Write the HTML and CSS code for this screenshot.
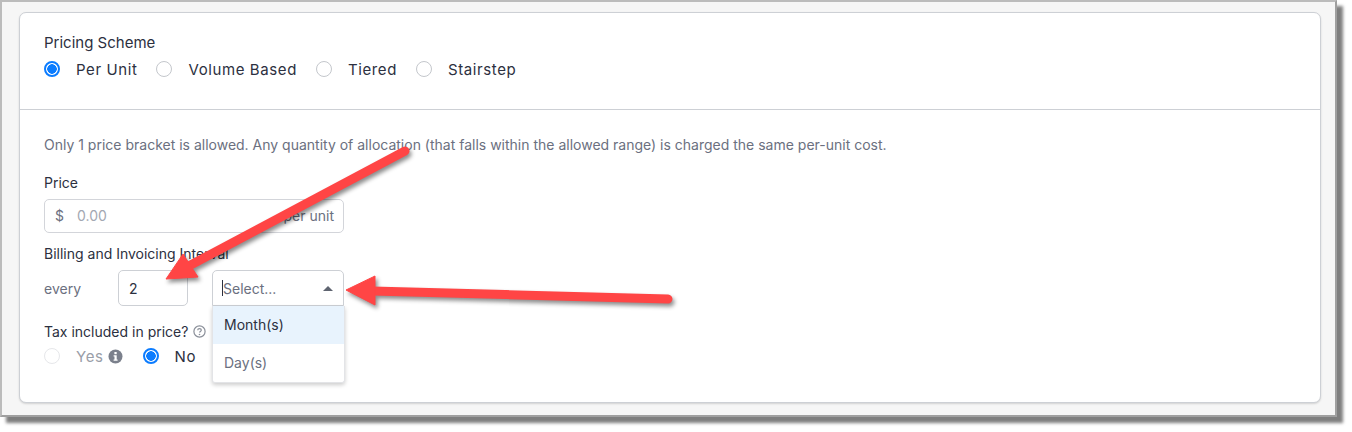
FILE: index.html
```html
<!DOCTYPE html>
<html lang="en">
<head>
    <meta charset="UTF-8">
    <title>Pricing Scheme</title>
    <link rel="stylesheet" href="styles.css">
</head>
<body>
    <div class="frame">
        <div class="card">
            <div class="card-head">
                <div class="field-label scheme-label">Pricing Scheme</div>
                <div class="radio-row">
                    <span class="radio checked"></span><span class="radio-text">Per Unit</span>
                    <span class="radio"></span><span class="radio-text">Volume Based</span>
                    <span class="radio"></span><span class="radio-text">Tiered</span>
                    <span class="radio"></span><span class="radio-text">Stairstep</span>
                </div>
            </div>
            <div class="card-body">
                <p class="hint">Only 1 price bracket is allowed. Any quantity of allocation (that falls within the allowed range) is charged the same per-unit cost.</p>

                <div class="field-label price-label">Price</div>
                <div class="price-input">
                    <span class="prefix">$</span>
                    <span class="placeholder">0.00</span>
                    <span class="suffix">per unit</span>
                </div>

                <div class="field-label interval-label">Billing and Invoicing Interval</div>
                <div class="interval-row">
                    <span class="every">every</span>
                    <div class="number-input">2</div>
                    <div class="select">
                        <span class="cursor"></span><span class="select-text">Select...</span>
                        <span class="caret"></span>
                        <div class="menu">
                            <div class="menu-item active">Month(s)</div>
                            <div class="menu-item">Day(s)</div>
                        </div>
                    </div>
                </div>

                <div class="field-label tax-label">
                    Tax included in price?
                    <svg class="help-icon" width="13" height="13" viewBox="0 0 13 13">
                        <circle cx="6.5" cy="6.5" r="5.6" fill="none" stroke="#8a8f99" stroke-width="1.2"/>
                        <path d="M4.7 5.2c0-1 .8-1.6 1.8-1.6s1.8.6 1.8 1.5c0 1.3-1.8 1.3-1.8 2.5" fill="none" stroke="#8a8f99" stroke-width="1.2"/>
                        <circle cx="6.5" cy="9.5" r=".8" fill="#8a8f99"/>
                    </svg>
                </div>
                <div class="radio-row tax-row">
                    <span class="radio disabled"></span><span class="radio-text muted">Yes</span>
                    <svg class="info-icon" width="15" height="15" viewBox="0 0 15 15">
                        <circle cx="7.5" cy="7.5" r="7" fill="#7b808c"/>
                        <rect x="6.4" y="3" width="2.3" height="2.2" fill="#fff"/>
                        <path d="M5.6 6.3h3.1v4.2h.9v1.2H5.6v-1.2h.9v-3h-.9z" fill="#fff"/>
                    </svg>
                    <span class="radio checked"></span><span class="radio-text">No</span>
                </div>
            </div>
        </div>

        <svg class="arrows" width="1352" height="432" viewBox="0 0 1352 432">
            <g fill="#ff4545" stroke="#ff4545" stroke-linejoin="round">
                <path d="M405 151 L185 268" fill="none" stroke-width="9" stroke-linecap="round"/>
                <path d="M166 279 L183 254 L198 277 Z" stroke-width="1"/>
                <path d="M372 291 L668 299" fill="none" stroke-width="9" stroke-linecap="round"/>
                <path d="M346 290 L375 276 L375 305 Z" stroke-width="1"/>
            </g>
        </svg>
    </div>
</body>
</html>
```

FILE: styles.css
```css
* {
    box-sizing: border-box;
}
html, body {
    height: 432px;
}
body {
    margin: 0;
    background: #fff;
    font-family: Inter, "Liberation Sans", sans-serif;
    font-size: 14px;
    color: #2c3040;
}
.frame {
    position: relative;
    width: 1337px;
    height: 417px;
    padding: 10px 15px 0 17px;
    background: #f6f6f6;
    border: 2px solid #bcbcbc;
    border-right-color: #a0a0a0;
    border-bottom-color: #a0a0a0;
    box-shadow: 6px 6px 3px rgba(0, 0, 0, 0.5);
}
.card {
    width: 1302px;
    height: 391px;
    background: #fff;
    border: 1px solid #cdd0d5;
    border-radius: 7px;
    box-shadow: 0 1px 2px rgba(0, 0, 0, 0.15);
}
.card-head {
    height: 97px;
    padding: 21px 24px 0;
    border-bottom: 1px solid #cdd0d5;
}
.card-body {
    padding: 26px 24px 0;
}
.field-label {
    font-size: 14px;
    line-height: 17px;
    color: #2c3040;
}
.scheme-label {
    font-size: 15px;
}
.radio-row {
    display: flex;
    align-items: center;
    height: 20px;
    margin-top: 8px;
    font-size: 15px;
}
.radio {
    flex: none;
    width: 16px;
    height: 16px;
    margin-right: 16px;
    background: #fff;
    border: 1px solid #c4c7cc;
    border-radius: 50%;
}
.radio.checked {
    border: 2px solid #0b7cff;
    background: radial-gradient(circle, #0b7cff 0 4.5px, #fff 5px);
}
.radio.disabled {
    border-color: #e6e7ea;
}
.radio-text {
    margin-right: 19px;
    letter-spacing: 0.6px;
}
.radio-text.muted {
    margin-right: 4px;
    color: #9a9ea8;
}
.hint {
    margin: 0;
    font-size: 14px;
    line-height: 18px;
    color: #6b7080;
}
.price-label {
    margin-top: 20px;
}
.price-input {
    display: flex;
    align-items: center;
    width: 300px;
    height: 34px;
    margin-top: 8px;
    padding: 0 9px 1px 10px;
    border: 1px solid #d3d5da;
    border-radius: 5px;
    font-size: 14px;
}
.prefix {
    width: 22px;
    color: #6b7080;
}
.placeholder {
    flex: 1;
    color: #a3a8b2;
}
.suffix {
    color: #6b7080;
}
.interval-label {
    margin-top: 12px;
}
.interval-row {
    display: flex;
    align-items: center;
    margin-top: 8px;
}
.every {
    width: 74px;
    color: #6b7080;
}
.number-input {
    display: flex;
    align-items: center;
    width: 70px;
    height: 36px;
    margin-right: 24px;
    padding-left: 10px;
    border: 1px solid #cdd0d5;
    border-radius: 5px;
}
.select {
    position: relative;
    display: flex;
    align-items: center;
    width: 132px;
    height: 36px;
    padding-left: 9px;
    border: 1px solid #cdd0d5;
    border-radius: 5px 5px 0 0;
    color: #6b7080;
}
.cursor {
    width: 1px;
    height: 16px;
    background: #2c3040;
}
.caret {
    position: absolute;
    right: 10px;
    top: 15px;
    border-left: 5px solid transparent;
    border-right: 5px solid transparent;
    border-bottom: 5px solid #5f6470;
}
.menu {
    position: absolute;
    top: 35px;
    left: -1px;
    width: 133px;
    background: #fff;
    border: 1px solid #e3e4e7;
    border-top: 0;
    border-radius: 0 0 3px 3px;
    box-shadow: 0 2px 4px rgba(0, 0, 0, 0.2);
}
.menu-item {
    height: 38px;
    padding-left: 11px;
    line-height: 38px;
    color: #6b7080;
}
.menu-item.active {
    background: #e8f3fd;
    color: #2c3040;
}
.tax-label {
    display: flex;
    align-items: center;
    gap: 5px;
    margin-top: 17px;
}
.tax-row {
    margin-top: 6px;
}
.info-icon {
    flex: none;
    margin-right: 20px;
}
.arrows {
    position: absolute;
    top: -2px;
    left: -2px;
    pointer-events: none;
    filter: drop-shadow(2px 3px 2px rgba(0, 0, 0, 0.45));
}
```
